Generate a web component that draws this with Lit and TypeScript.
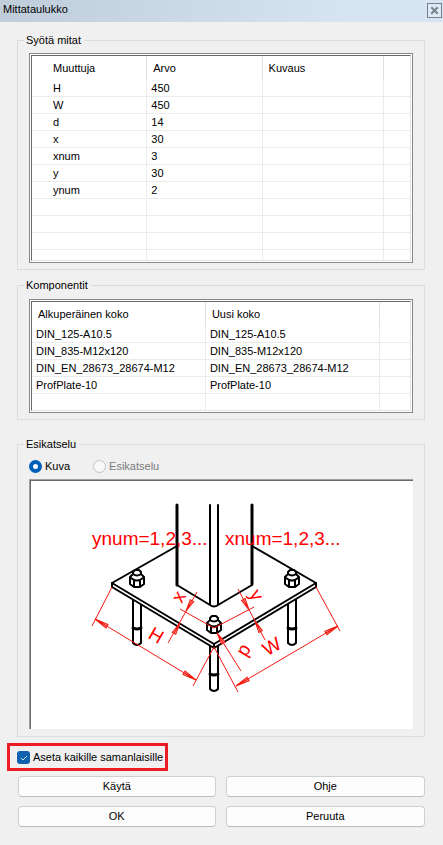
import { LitElement, html, svg, css } from "lit";
import { customElement } from "lit/decorators.js";

const VARIABLES: string[][] = [
  ["H", "450"],
  ["W", "450"],
  ["d", "14"],
  ["x", "30"],
  ["xnum", "3"],
  ["y", "30"],
  ["ynum", "2"],
  ["", ""],
  ["", ""],
  ["", ""],
  ["", ""],
];

const COMPONENTS: string[] = [
  "DIN_125-A10.5",
  "DIN_835-M12x120",
  "DIN_EN_28673_28674-M12",
  "ProfPlate-10",
  "",
];

@customElement("base-plate-drawing")
class BasePlateDrawing extends LitElement {
  static styles = css`
    :host {
      display: block;
    }
    svg {
      display: block;
      width: 100%;
    }
    .ink {
      fill: none;
      stroke: #000;
      stroke-width: 2;
      stroke-linejoin: round;
      stroke-linecap: round;
    }
    .thick {
      stroke-width: 3;
    }
    .white {
      fill: #fff;
    }
    .dim {
      fill: none;
      stroke: #f21a10;
      stroke-width: 1;
    }
    .head {
      fill: #f8a8a0;
      stroke: #f21a10;
      stroke-width: 1;
    }
    text {
      font: 19px "Liberation Sans", Arial, sans-serif;
      fill: #f00;
    }
    .mid {
      text-anchor: middle;
    }
  `;

  private bolt(x: number, y: number) {
    return svg`<g transform="translate(${x} ${y})">
      <path class="ink white" d="M-7-3 L-4-6 V-8 L-2-10 H2 L4-8 V-6 L7-3 V4 L3 7 H-3 L-7 4 Z" />
      <path class="ink" d="M-6-2 Q0 3 6-2 M-3 0 V6 M3 0 V6 M-4-6 Q0-3 4-6" />
    </g>`;
  }

  private rod(x: number, top: number, bottom: number) {
    return svg`<path class="ink white" d="M${x - 4} ${top} V${bottom - 2} Q${x} ${bottom + 2} ${x + 4} ${bottom - 2} V${top}" />
      <path class="ink thick" d="M${x - 4} ${bottom - 17} Q${x} ${bottom - 15} ${x + 4} ${bottom - 17}" />`;
  }

  private head(x: number, y: number, angle: number, size = 12) {
    return svg`<path class="head" transform="translate(${x} ${y}) rotate(${angle})" d="M0 0 L${-size}-2 V2 Z M0 0 H${-size}" />`;
  }

  render() {
    return html`<svg viewBox="31 482 382 248" role="img" aria-label="Kuva">
      ${this.rod(137, 600, 646)} ${this.rod(292, 600, 646)} ${this.rod(214, 646, 692)}
      <path class="ink white" d="M112 584 L177 547 H252 L316 584 V588 L214 649 L112 588 Z" />
      <path class="ink" d="M112 584 L214 645 L316 584 M214 645 V649" />
      <path d="M177 505 H252 V586 L218 606 Q214 609 210 606 L177 586 Z" fill="#fff" />
      <path class="ink thick" d="M177 506 V586" />
      <path class="ink" d="M177 586 L210 606 Q214 609 218 606 L252 586 M210 506 V605 M218 506 V605" />
      <path class="ink thick" d="M252 506 V585" />
      ${this.bolt(137, 581)} ${this.bolt(292, 581)} ${this.bolt(214, 627)}

      <path class="dim" d="M112 588 L92 627 M95 620 L196 681 M214 648 L193 687" />
      <path class="dim" d="M214 648 L238 693 M236 687 L338 627 M316 588 L340 632" />
      <path class="dim" d="M180 610 L214 629 L254 608 M197 593 L168 644 M238 590 L265 641" />
      <path class="dim" d="M217 634 L241 672" />
      ${this.head(95, 620, 211, 14)} ${this.head(196, 681, 31, 14)}
      ${this.head(236, 687, 150, 14)} ${this.head(338, 627, -30, 14)}
      ${this.head(186, 612, 120)} ${this.head(180, 624, -60)}
      ${this.head(249, 611, 62)} ${this.head(255, 622, 242)} ${this.head(217, 634, 238)}

      <text x="92" y="546">ynum=1,2,3...</text>
      <text x="225" y="546">xnum=1,2,3...</text>
      <text class="mid" transform="translate(184 601) rotate(-60)">x</text>
      <text class="mid" transform="translate(251 599) rotate(60)">y</text>
      <text class="mid" transform="translate(153 642) rotate(30)">H</text>
      <text class="mid" transform="translate(275 653) rotate(-30)">W</text>
      <text class="mid" transform="translate(240 649) rotate(120)">d</text>
    </svg>`;
  }
}

@customElement("app-root")
class AppRoot extends LitElement {
  static styles = css`
    :host {
      display: block;
      min-height: 100vh;
      background: #f0f0f0;
      color: #000;
      font: 11px/17px "Liberation Sans", Arial, sans-serif;
    }
    * {
      box-sizing: border-box;
    }
    header {
      display: flex;
      align-items: center;
      justify-content: space-between;
      height: 22px;
      padding: 0 1px 4px 3px;
      background: linear-gradient(90deg, #bfcddb, #d7e4f1 80%);
    }
    h1 {
      margin: 0;
      font-size: 11px;
      font-weight: normal;
    }
    .close {
      width: 15px;
      height: 15px;
      margin-top: 3px;
      padding: 0;
      border: 1px solid #75838f;
      background: #dfe9f3;
    }
    .close svg {
      display: block;
      width: 13px;
      height: 13px;
    }
    form {
      display: flex;
      flex-direction: column;
      padding: 12px 18px 17px 17px;
    }
    fieldset {
      min-width: 0;
      margin: 0 0 9px;
      padding: 7px 11px 6px;
      border: 1px solid #dcdcdc;
    }
    legend {
      margin-left: -5px;
      padding: 0 3px 0 2px;
      line-height: 12px;
    }
    .list {
      padding: 1px;
      border: 1px solid #828790;
      background: #fff;
    }
    .view {
      overflow: hidden;
      border: 1px solid #e3e3e3;
      border-top-color: #696969;
      border-left-color: #696969;
    }
    .variables {
      height: 206px;
    }
    .components {
      height: 110px;
    }
    table {
      width: 100%;
      table-layout: fixed;
      border-collapse: separate;
      border-spacing: 0;
    }
    th,
    td {
      padding: 0;
      font-weight: normal;
      text-align: left;
      white-space: nowrap;
      border-right: 1px solid #ececec;
    }
    th {
      height: 24px;
      padding-left: 6px;
      border-right-color: #e0e0e0;
    }
    td {
      height: 17px;
      padding-left: 4px;
      line-height: 16px;
      border-bottom: 1px solid #ececec;
    }
    th:last-child,
    td:last-child {
      border-right: 0;
    }
    .variables th:first-child,
    .variables td:first-child {
      padding-left: 21px;
    }
    .name {
      width: 30.5%;
    }
    .value {
      width: 30.5%;
    }
    .note {
      width: 32%;
    }
    .size {
      width: 46%;
    }
    .parts {
      margin-bottom: 18px;
      padding-top: 8px;
    }
    .preview {
      margin-bottom: 6px;
      padding: 8px 11px 7px;
    }
    .choices {
      display: flex;
      gap: 23px;
      margin: 0 0 4px;
    }
    label {
      display: flex;
      align-items: center;
      gap: 3px;
    }
    .muted {
      color: #7a7a7a;
    }
    input {
      appearance: none;
      flex: none;
      width: 13px;
      height: 13px;
      margin: 0;
      border: 1px solid #c4c4c4;
      background: #f8f8f8;
    }
    input[type="radio"] {
      border-radius: 50%;
    }
    input[type="radio"]:checked {
      border: 4px solid #005fb8;
      background: #fff;
    }
    .tick {
      position: relative;
      display: flex;
    }
    input[type="checkbox"] {
      border: 0;
      border-radius: 3px;
      background: #0f62b0;
    }
    .tick svg {
      position: absolute;
      inset: 0;
      pointer-events: none;
    }
    .picture {
      border-top: 1px solid #a0a0a0;
      border-left: 1px solid #a0a0a0;
    }
    .canvas {
      border-top: 1px solid #696969;
      border-left: 1px solid #696969;
      background: #fff;
    }
    .apply {
      align-self: flex-start;
      height: 28px;
      margin: 0 0 5px -10px;
      padding: 0 2px 0 7px;
      border: 3px solid #ed1c24;
    }
    .buttons {
      display: grid;
      grid-template-columns: 99fr 100fr;
      gap: 9px 10px;
      padding-left: 1px;
    }
    .buttons button {
      height: 21px;
      padding: 0;
      border: 1px solid #d0d0d0;
      border-bottom-color: #bcbcbc;
      border-radius: 4px;
      background: #fdfdfd;
      color: #000;
      font: inherit;
    }
  `;

  render() {
    return html`
      <header>
        <h1>Mittataulukko</h1>
        <button class="close" type="button" aria-label="Sulje">
          <svg viewBox="0 0 13 13">
            <path d="M4 4 L9 9 M9 4 L4 9" stroke="#75838f" stroke-width="2" stroke-linecap="square" />
          </svg>
        </button>
      </header>
      <form>
        <fieldset>
          <legend>Syötä mitat</legend>
          <div class="list">
            <div class="view variables">
              <table>
                <colgroup>
                  <col class="name" />
                  <col class="value" />
                  <col class="note" />
                  <col />
                </colgroup>
                <thead>
                  <tr>
                    <th>Muuttuja</th>
                    <th>Arvo</th>
                    <th>Kuvaus</th>
                    <th></th>
                  </tr>
                </thead>
                <tbody>
                  ${VARIABLES.map(
                    ([name, value]) => html`<tr><td>${name}</td><td>${value}</td><td></td><td></td></tr>`
                  )}
                </tbody>
              </table>
            </div>
          </div>
        </fieldset>

        <fieldset class="parts">
          <legend>Komponentit</legend>
          <div class="list">
            <div class="view components">
              <table>
                <colgroup>
                  <col class="size" />
                  <col class="size" />
                  <col />
                </colgroup>
                <thead>
                  <tr>
                    <th>Alkuperäinen koko</th>
                    <th>Uusi koko</th>
                    <th></th>
                  </tr>
                </thead>
                <tbody>
                  ${COMPONENTS.map((size) => html`<tr><td>${size}</td><td>${size}</td><td></td></tr>`)}
                </tbody>
              </table>
            </div>
          </div>
        </fieldset>

        <fieldset class="preview">
          <legend>Esikatselu</legend>
          <div class="choices">
            <label><input type="radio" name="mode" checked />Kuva</label>
            <label class="muted"><input type="radio" name="mode" disabled />Esikatselu</label>
          </div>
          <div class="picture">
            <div class="canvas"><base-plate-drawing></base-plate-drawing></div>
          </div>
        </fieldset>

        <label class="apply">
          <span class="tick">
            <input type="checkbox" checked />
            <svg viewBox="0 0 13 13">
              <path d="M4 7 L6 9 L10 5" fill="none" stroke="#cfe3f5" />
            </svg>
          </span>
          Aseta kaikille samanlaisille
        </label>

        <div class="buttons">
          <button type="button">Käytä</button>
          <button type="button">Ohje</button>
          <button type="button">OK</button>
          <button type="button">Peruuta</button>
        </div>
      </form>
    `;
  }
}
